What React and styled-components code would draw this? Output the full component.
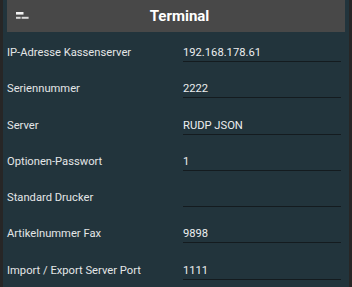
import React from "react";
import styled, { createGlobalStyle } from "styled-components";

const Global = createGlobalStyle`
  html, body { margin: 0; padding: 0; background: #262626; }
  body { font-family: Roboto, "Noto Sans", sans-serif; }
`;

const Frame = styled.div`
  width: 352px;
  height: 287px;
  box-sizing: border-box;
  padding: 0 3px;
  background: #272626;
  overflow: hidden;
`;

const Screen = styled.div`
  height: 100%;
  box-sizing: border-box;
  padding: 0 4px;
  background: #22343c;
  display: flex;
  flex-direction: column;
`;

const Header = styled.header`
  height: 32px;
  flex: none;
  background: #484848;
  display: flex;
  align-items: center;
  position: relative;
`;

const MenuButton = styled.div`
  width: 32px;
  height: 32px;
  display: flex;
  align-items: center;
  justify-content: center;
`;

const Title = styled.h1`
  position: absolute;
  left: 0;
  right: 0;
  top: 0;
  margin: 0;
  padding-left: 7px;
  line-height: 32px;
  text-align: center;
  font-size: 15px;
  font-weight: 700;
  color: #ffffff;
  pointer-events: none;
`;

const List = styled.div`
  display: flex;
  flex-direction: column;
  gap: 20.3px;
  padding-top: 14px;
`;

const Row = styled.div`
  display: grid;
  grid-template-columns: 176px 158px;
  align-items: end;
  height: 16px;
`;

const Label = styled.span`
  font-size: 11.2px;
  line-height: 14px;
  color: #e4e6e7;
  padding-bottom: 2px;
  white-space: nowrap;
`;

const Field = styled.div`
  font-size: 11.2px;
  line-height: 14px;
  height: 15px;
  color: #eceeef;
  border-bottom: 1px solid #141b1f;
  white-space: nowrap;
`;

const rows = [
  ["IP-Adresse Kassenserver", "192.168.178.61"],
  ["Seriennummer", "2222"],
  ["Server", "RUDP JSON"],
  ["Optionen-Passwort", "1"],
  ["Standard Drucker", ""],
  ["Artikelnummer Fax", "9898"],
  ["Import / Export Server Port", "1111"],
];

function SortIcon() {
  return (
    <svg width="14" height="8" viewBox="0 0 14 8">
      <rect x="0" y="0" width="7.5" height="2.6" fill="#f2f2f2" />
      <rect x="0" y="4.8" width="4.6" height="2" fill="#d8d8d8" />
      <rect x="5.6" y="4.8" width="7" height="2" fill="#d8d8d8" />
    </svg>
  );
}

export default function App() {
  return (
    <Frame>
      <Global />
      <Screen>
        <Header>
          <MenuButton>
            <SortIcon />
          </MenuButton>
          <Title>Terminal</Title>
        </Header>
        <List>
          {rows.map(([l, v]) => (
            <Row key={l}>
              <Label>{l}</Label>
              <Field>{v}</Field>
            </Row>
          ))}
        </List>
      </Screen>
    </Frame>
  );
}
